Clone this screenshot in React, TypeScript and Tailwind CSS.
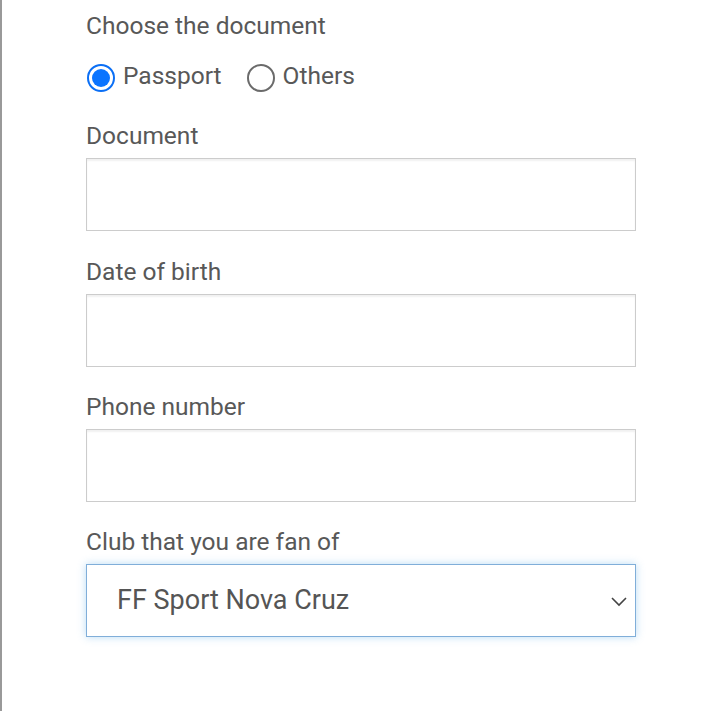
import React, { useState } from "react";

const fields = ["Document", "Date of birth", "Phone number"];

const Radio: React.FC<{ checked: boolean; label: string; onClick: () => void }> = ({
  checked,
  label,
  onClick,
}) => {
  return (
    <button type="button" onClick={onClick} className="flex items-center gap-[8px]">
      {checked ? (
        <span className="flex h-[28px] w-[28px] items-center justify-center rounded-full border-[2px] border-[#0b6ff5] bg-white">
          <span className="h-[18px] w-[18px] rounded-full bg-[#0b74ff]" />
        </span>
      ) : (
        <span className="h-[28px] w-[28px] rounded-full border-[2px] border-[#6b6b6b] bg-white" />
      )}
      <span className="-mt-[5px] text-[24.5px] leading-[30px] text-[#585858]">{label}</span>
    </button>
  );
};

export default function App() {
  const [doc, setDoc] = useState("passport");

  return (
    <div
      className="h-[711px] w-[720px] overflow-hidden border-l-2 border-[#999] bg-white"
      style={{ fontFamily: "Roboto, 'Liberation Sans', sans-serif" }}
    >
      <div className="w-[636px] pl-[84px] pt-[11px]">
        <p className="text-[24.5px] leading-[30px] text-[#585858]">Choose the document</p>
        <div className="mt-[23px] flex items-center gap-[25px] pl-[1px]">
          <Radio checked={doc === "passport"} label="Passport" onClick={() => setDoc("passport")} />
          <Radio checked={doc === "others"} label="Others" onClick={() => setDoc("others")} />
        </div>

        {fields.map((f, i) => (
          <div key={f} className={i === 0 ? "mt-[29px]" : i === 1 ? "mt-[26px]" : "mt-[25px]"}>
            <p className="text-[24.5px] leading-[30px] text-[#585858]">{f}</p>
            <input
              className="mt-[7px] block h-[73px] w-[550px] border border-[#ccc] bg-white px-[30px] text-[27px] text-[#555] shadow-[inset_0_2px_2px_rgba(0,0,0,0.06)] outline-none"
              type="text"
            />
          </div>
        ))}

        <div className="mt-[25px]">
          <p className="text-[24.5px] leading-[30px] text-[#585858]">Club that you are fan of</p>
          <div className="relative mt-[7px] flex h-[73px] w-[550px] items-center border border-[#80aed9] bg-white pl-[30px] shadow-[0_0_8px_rgba(102,175,233,0.45)]">
            <span className="text-[27px] text-[#555]">FF Sport Nova Cruz</span>
            <svg
              className="absolute right-[7px] top-[30px]"
              width="18"
              height="12"
              viewBox="0 0 18 12"
              fill="none"
              stroke="#444"
              strokeWidth="1.6"
            >
              <path d="M2 3l7 7 7-7" />
            </svg>
          </div>
        </div>
      </div>
    </div>
  );
}
